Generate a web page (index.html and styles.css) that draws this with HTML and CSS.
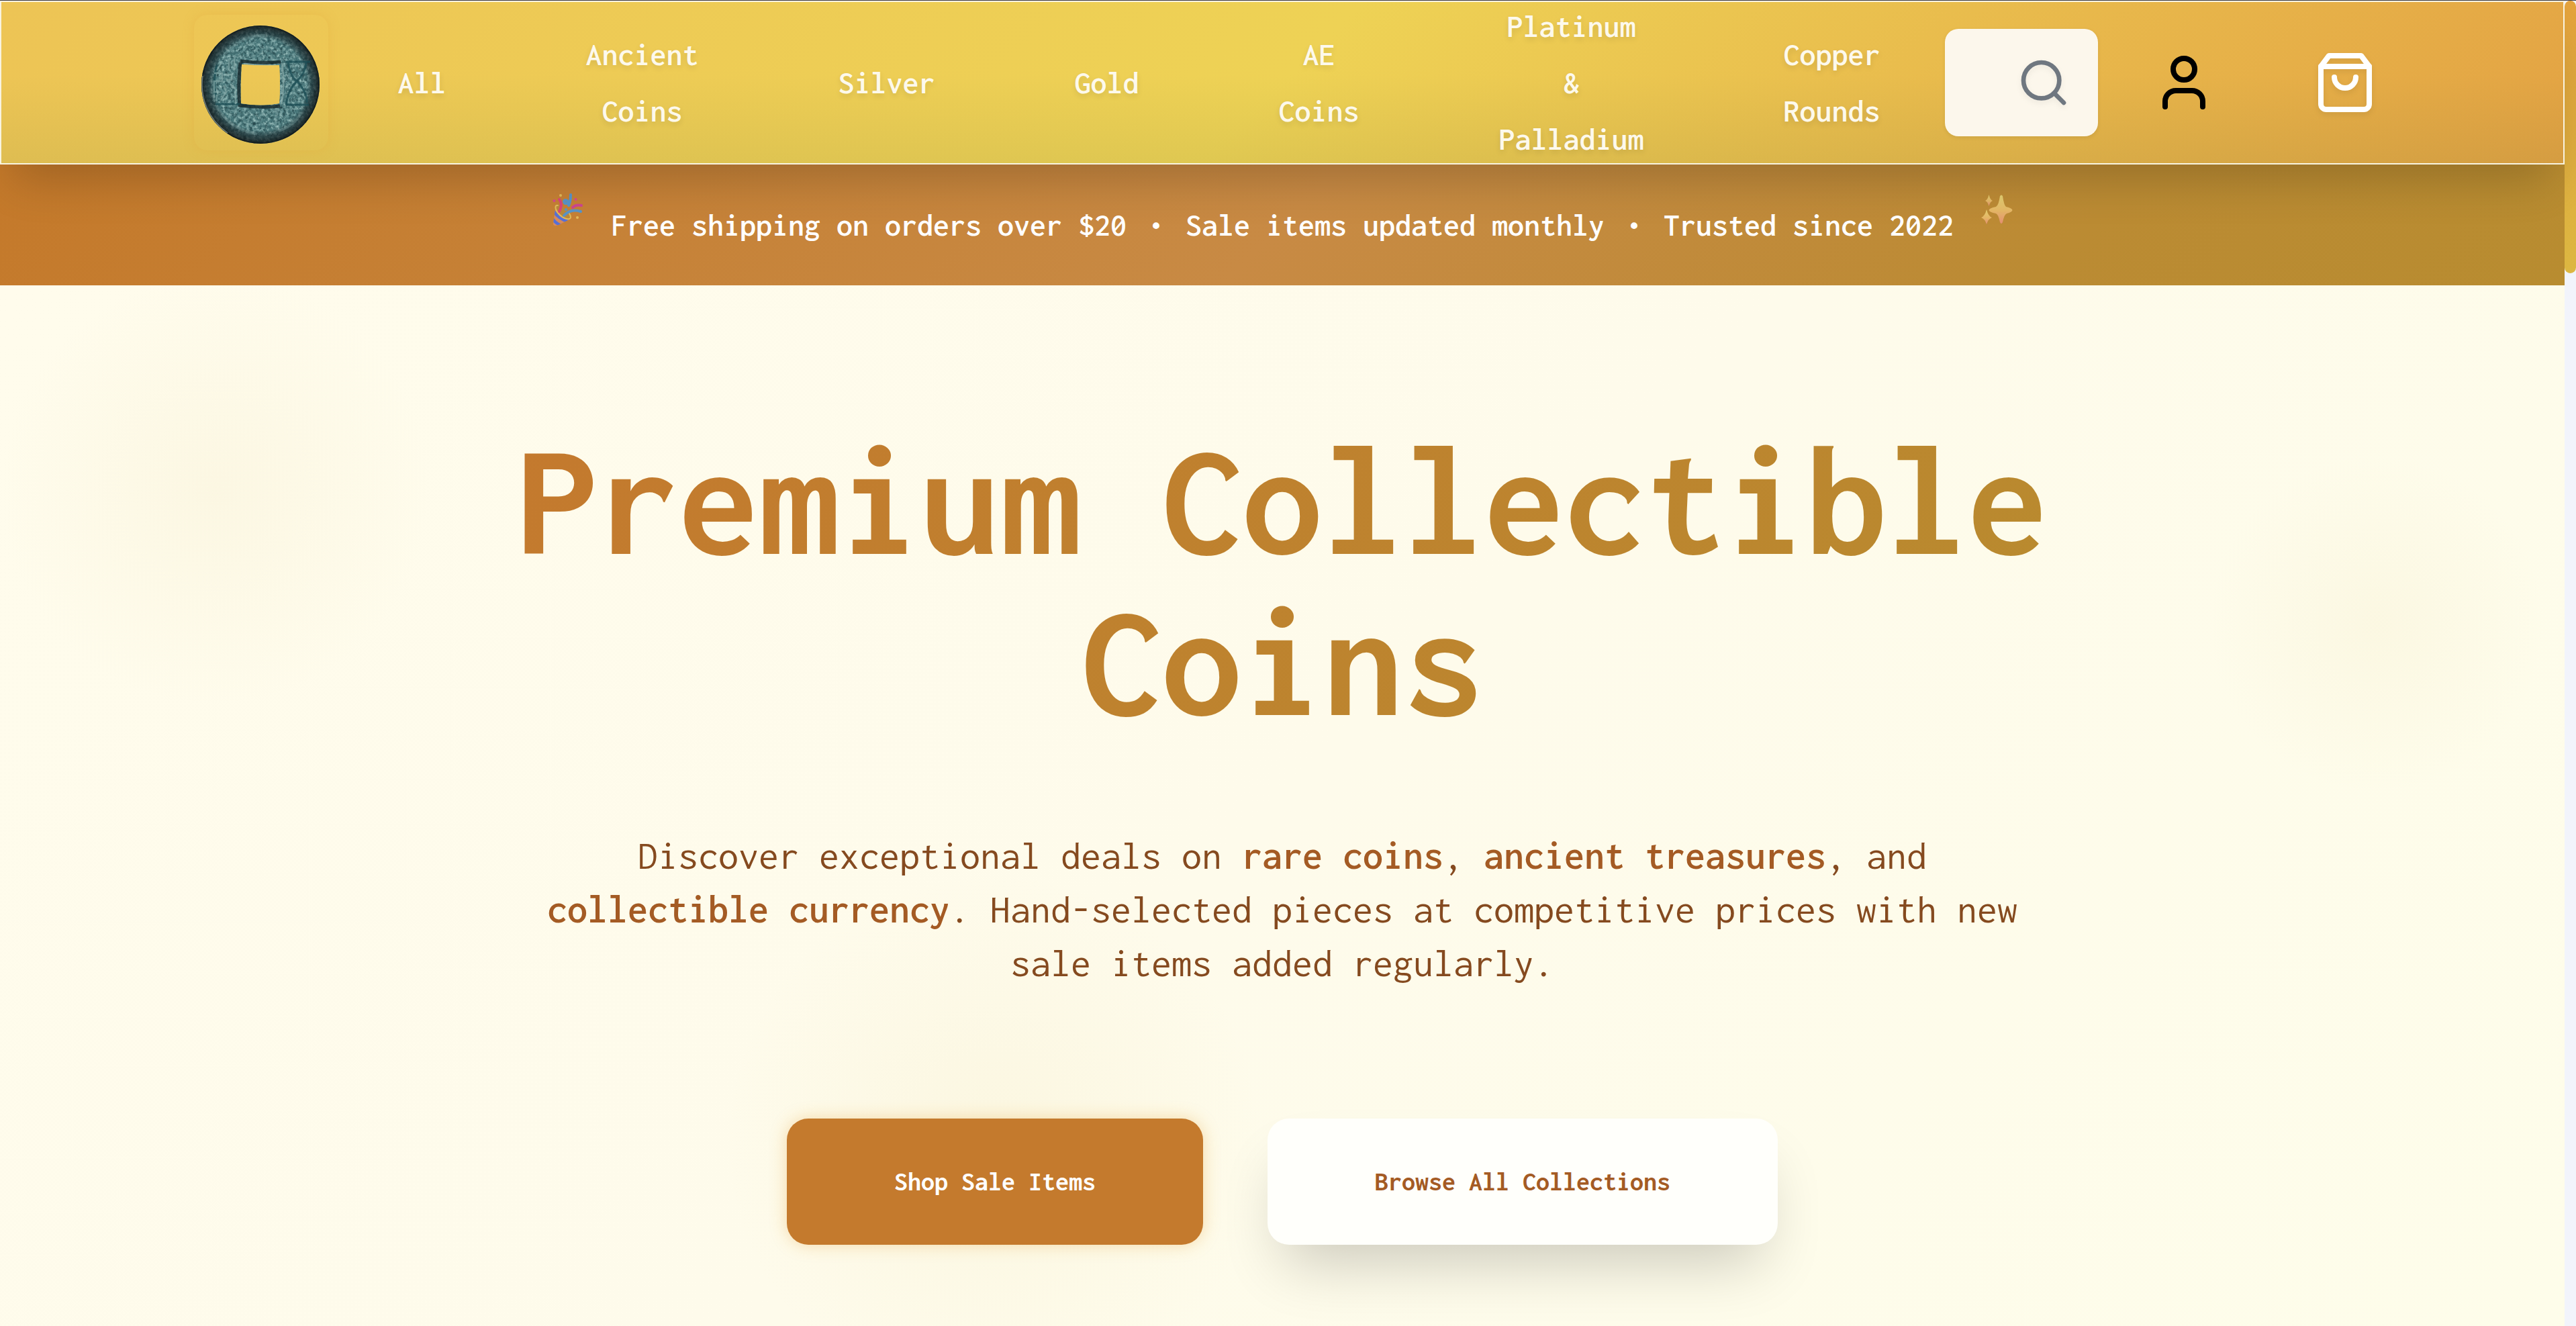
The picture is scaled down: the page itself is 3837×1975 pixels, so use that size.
FILE: index.html
```html
<!DOCTYPE html>
<html lang="en">
<head>
<meta charset="utf-8">
<title>Premium Collectible Coins</title>
<link rel="stylesheet" href="styles.css">
</head>
<body>
<div class="window">
  <div class="page">
    <header class="header">
      <a class="logo" href="#">
        <svg class="logo-coin" viewBox="0 0 178 178">
          <defs>
            <filter id="patina" x="0" y="0" width="100%" height="100%" color-interpolation-filters="sRGB">
              <feTurbulence type="fractalNoise" baseFrequency="0.22" numOctaves="4" seed="8" result="n"/>
              <feColorMatrix in="n" type="matrix" values="0 0 0 0 0.62  0 0 0 0 0.76  0 0 0 0 0.75  1.6 1.6 0 0 -1.45" result="light"/>
              <feColorMatrix in="n" type="matrix" values="0 0 0 0 0.1  0 0 0 0 0.22  0 0 0 0 0.24  0 -1.3 -1.3 0 1.35" result="dark"/>
              <feComposite in="light" in2="SourceGraphic" operator="in" result="l"/>
              <feComposite in="dark" in2="SourceGraphic" operator="in" result="d"/>
              <feMerge><feMergeNode in="SourceGraphic"/><feMergeNode in="d"/><feMergeNode in="l"/></feMerge>
            </filter>
            <radialGradient id="edge">
              <stop offset=".78" stop-color="#17272b" stop-opacity="0"/>
              <stop offset=".87" stop-color="#17272b" stop-opacity=".6"/>
              <stop offset=".97" stop-color="#12191a" stop-opacity=".8"/>
              <stop offset="1" stop-color="#0e1415"/>
            </radialGradient>
          </defs>
          <path filter="url(#patina)" fill="#4a787b" fill-rule="evenodd" d="M89 1A88 88 0 1 1 89 177A88 88 0 1 1 89 1ZM62 59Q60 90 61 117Q90 122 117 117Q119 90 117 60Q90 61 62 59Z"/>
          <circle cx="89" cy="89" r="88" fill="url(#edge)"/>
          <path class="groove" d="M59 54Q90 58 119 55M59 56Q55 90 58 120Q90 124 118 121"/>
          <path class="groove thin" d="M127 55h36M130 56Q133 76 143 84Q158 98 158 116M157 56Q156 72 143 84Q130 96 127 119M127 119h34M22 118h36M24 60Q16 90 26 114"/>
          <path class="ridge" d="M121 57Q126 90 120 118M42 50v18M50 50v18M32 54l-8 14M20 72h12v12h-12v16h10M38 74h8v8h-8M44 88l8 8v22M34 90l4 10-8 12M24 104v10M66 58Q88 61 112 60"/>
          <path class="ridge soft" d="M34 46Q62 14 96 16M26 124Q42 154 84 163M150 130Q140 150 116 158M114 124l-3 32"/>
          <path class="rim" d="M3 76A87 87 0 0 0 40 161"/>
        </svg>
      </a>
      <nav class="nav">
        <a href="#">All</a>
        <a href="#">Ancient<br>Coins</a>
        <a href="#">Silver</a>
        <a href="#">Gold</a>
        <a href="#">AE<br>Coins</a>
        <a href="#">Platinum<br>&amp;<br>Palladium</a>
        <a href="#">Copper<br>Rounds</a>
      </nav>
      <div class="search">
        <svg class="search-icon" viewBox="0 0 24 24"><circle cx="11" cy="11" r="8"/><path d="m21 21-4.3-4.3"/></svg>
      </div>
      <a class="account" href="#">
        <svg class="action-icon" viewBox="0 0 24 24"><path d="M19 21v-2a4 4 0 0 0-4-4H9a4 4 0 0 0-4 4v2"/><circle cx="12" cy="7" r="4"/></svg>
      </a>
      <a class="cart" href="#">
        <svg class="action-icon" viewBox="0 0 24 24"><path d="M6 2 3 6v14a2 2 0 0 0 2 2h14a2 2 0 0 0 2-2V6l-3-4Z"/><path d="M3 6h18"/><path d="M16 10a4 4 0 0 1-8 0"/></svg>
      </a>
    </header>

    <div class="banner">
      <svg class="banner-icon" viewBox="0 0 48 50">
        <defs>
          <clipPath id="cone"><path d="M6 17Q6 25 13 32Q21 40 28 38L10 47Q2 50 2 45Z"/></clipPath>
        </defs>
        <path fill="#b98a3c" d="M6 17Q12 15 20 23Q29 32 28 38Q20 40 12 32Q5 25 6 17Z"/>
        <g clip-path="url(#cone)">
          <path fill="#d98c62" d="M0 14h30v36H0z"/>
          <path fill="none" stroke="#4c6fe8" stroke-width="4.500" d="M2 25Q8 37 24 42M0 36Q4 44 14 48"/>
        </g>
        <path fill="none" stroke="#e4c25c" stroke-width="2" stroke-linecap="round" d="M9 18Q4 17 6 24Q10 33 19 37Q27 40 28 36Q28 33 26 30"/>
        <path class="stream pink" d="M11 9Q17 16 11 27"/>
        <path class="stream magenta" d="M31 21Q36 16 44 18"/>
        <path class="stream blue" d="M28 2Q28 12 25 18M25 14Q19 17 18 12Q19 8 24 12M18 33Q28 22 43 27"/>
        <g fill="#d9429c"><circle cx="3.500" cy="11" r="2"/><circle cx="35.500" cy="9" r="2"/></g>
        <g fill="#e6c05f"><circle cx="13" cy="3" r="2"/><circle cx="38" cy="36" r="2"/></g>
        <circle cx="21" cy="24" r="2" fill="#4d97d8"/>
      </svg>
      <p class="banner-text"><span>Free shipping on orders over $20</span><span>•</span><span>Sale items updated monthly</span><span>•</span><span>Trusted since 2022</span></p>
      <svg class="banner-icon" viewBox="0 0 48 50">
        <defs>
          <linearGradient id="spark" x1="0" y1="0" x2="0" y2="1"><stop offset="0" stop-color="#ead979"/><stop offset=".55" stop-color="#ebbd6c"/><stop offset="1" stop-color="#e9917a"/></linearGradient>
        </defs>
        <g fill="url(#spark)">
          <path d="M29 4Q31 1 33 4Q35 18 38 20Q47 22 47.500 25Q47 28 39 30Q35 32 33 43Q31 47 29 43Q27 32 23 30Q13 28 12.500 25Q13 22 23 20Q27 18 29 4Z"/>
          <path d="M12.500 2Q14.500 10 18 11Q14.500 12 12.500 19Q10.500 12 7 11Q10.500 10 12.500 2Z"/>
          <path d="M9 24Q11.500 34 17 36Q11.500 38 9 46Q6.500 38 1 36Q6.500 34 9 24Z"/>
        </g>
      </svg>
    </div>

    <main class="hero">
      <h1 class="hero-title">Premium Collectible<br>Coins</h1>
      <p class="hero-text">Discover exceptional deals on <strong>rare coins</strong>, <strong>ancient treasures</strong>, and<br><strong>collectible currency</strong>. Hand-selected pieces at competitive prices with new<br>sale items added regularly.</p>
      <div class="hero-actions">
        <a class="button button-primary" href="#">Shop Sale Items</a>
        <a class="button button-light" href="#">Browse All Collections</a>
      </div>
    </main>
  </div>
  <div class="scrollbar"><div class="scrollbar-thumb"></div></div>
</div>
</body>
</html>
```
FILE: styles.css
```css
* { box-sizing: border-box; }

body {
  margin: 0;
  height: 1975px;
  overflow: hidden;
  font-family: Inconsolata, "Noto Sans Mono CJK SC", "Noto Sans Mono CJK JP", "DejaVu Sans Mono", monospace;
  font-weight: 400;
}

a { color: inherit; text-decoration: none; }
p, h1 { margin: 0; }

.window {
  display: flex;
  height: 1975px;
  border-top: 1px solid #3d3a40;
}

.page {
  flex: 1;
  display: flex;
  flex-direction: column;
}

.scrollbar { width: 17px; background: #f2f4fb; }
.scrollbar-thumb {
  height: 406px;
  border-radius: 9px;
  background: linear-gradient(#e3a23c, #dcb741);
}

/* Header */
.header {
  position: relative;
  z-index: 1;
  display: flex;
  align-items: center;
  height: 244px;
  padding-left: 287px;
  border: 2px solid #f8f3e0;
  background:
    linear-gradient(transparent 45%, rgba(90, 110, 50, .1)),
    linear-gradient(135deg, #edc455, #eed255 50%, #e3a243);
  background-clip: padding-box;
  box-shadow: 0 40px 70px -20px rgba(0, 0, 0, .2);
}

.logo {
  display: flex;
  width: 200px;
  height: 202px;
  padding: 15px 9px;
  border-radius: 20px;
  box-shadow: 0 0 16px rgba(226, 165, 60, .35);
}
.logo-coin { width: 180px; height: 178px; }
.groove { fill: none; stroke: #16282c; stroke-width: 5; opacity: .8; }
.groove.thin { stroke-width: 3; stroke: #1c4d55; }
.ridge { fill: none; stroke: #86aaa8; stroke-width: 2.500; opacity: .7; }
.ridge.soft { stroke-width: 4; opacity: .3; }
.rim { fill: none; stroke: #9aa6a0; stroke-width: 1.500; opacity: .7; }

.logo-coin { mask: radial-gradient(#000, #000); clip-path: path(evenodd, "M0 0H180V178H0ZM62 59Q60 90 61 117Q90 122 118 117Q120 90 118 60Q90 61 62 59Z"); }

.nav {
  display: flex;
  align-items: center;
  gap: 208px;
  margin-left: 103.500px;
  color: #fdf9ec;
  font-size: 48px;
  line-height: 84px;
  font-weight: 600;
  text-align: center;
  white-space: nowrap;
  text-shadow: 0 4px 8px rgba(0, 0, 0, .1);
}

.search {
  display: flex;
  align-items: center;
  width: 228px;
  height: 160px;
  margin-left: 96.500px;
  padding-left: 107px;
  border-radius: 20px;
  background: #fcf7ec;
  box-shadow: 0 2px 6px rgba(0, 0, 0, .08);
}
.search-icon, .action-icon {
  display: block;
  fill: none;
  stroke: currentColor;
  stroke-width: 2;
  stroke-linecap: round;
  stroke-linejoin: round;
}
.search-icon { width: 80px; height: 80px; color: #6f7780; filter: drop-shadow(0 4px 4px rgba(0, 0, 0, .06)); }
.action-icon { width: 96px; height: 96px; }
.account { margin-left: 80px; color: #000; }
.cart { margin-left: 144px; color: #fff; filter: drop-shadow(0 4px 4px rgba(0, 0, 0, .08)); }

/* Announcement bar */
.banner {
  display: flex;
  justify-content: center;
  gap: 40px;
  height: 180px;
  background: linear-gradient(135deg, #c4792a, #c88a44 50%, #bb8b33 80%, #b88c30);
  color: #fff;
  font-size: 48px;
  line-height: 180px;
  font-weight: 600;
}
.banner-icon { width: 48px; height: 50px; margin-top: 43px; opacity: .9; }
.stream { fill: none; stroke-width: 4; stroke-linecap: round; }
.pink { stroke: #e03f80; }
.magenta { stroke: #cf3f9c; }
.blue { stroke: #4d97db; }
.banner-text { display: flex; gap: 32px; white-space: nowrap; }

/* Hero */
.hero {
  flex: 1;
  padding-top: 200px;
  text-align: center;
  background:
    radial-gradient(circle at 320px 305px, rgba(232, 215, 165, .13), transparent 320px),
    radial-gradient(circle at 3540px 505px, rgba(232, 215, 165, .12), transparent 250px),
    radial-gradient(circle at 1480px 1275px, rgba(232, 215, 150, .12), transparent 400px),
    linear-gradient(135deg, #fffcec, #fefbeb 50%, #fefdea);
}
.hero-title {
  width: 2304px;
  margin: 0 auto;
  font-size: 240px;
  line-height: 240px;
  font-weight: 700;
  white-space: nowrap;
  background: linear-gradient(135deg, #c4792e, #b88c2f);
  -webkit-background-clip: text;
  background-clip: text;
  color: transparent;
}
.hero-text {
  margin-top: 129px;
  color: #854a1f;
  font-size: 60px;
  line-height: 80px;
}
.hero-text strong { color: #a45b24; font-weight: 600; }

.hero-actions {
  display: flex;
  justify-content: center;
  gap: 96px;
  margin-top: 192px;
}
.button {
  height: 188px;
  padding: 0 160px;
  border-radius: 32px;
  font-size: 40px;
  line-height: 188px;
  font-weight: 700;
  white-space: nowrap;
}
.button-primary { background: #c47a2d; color: #fff; box-shadow: 0 0 24px rgba(229, 160, 50, .35); }
.button-light {
  background: #fffffb;
  color: #a45b24;
  box-shadow: 0 50px 90px -24px rgba(0, 0, 0, .2);
}
```
